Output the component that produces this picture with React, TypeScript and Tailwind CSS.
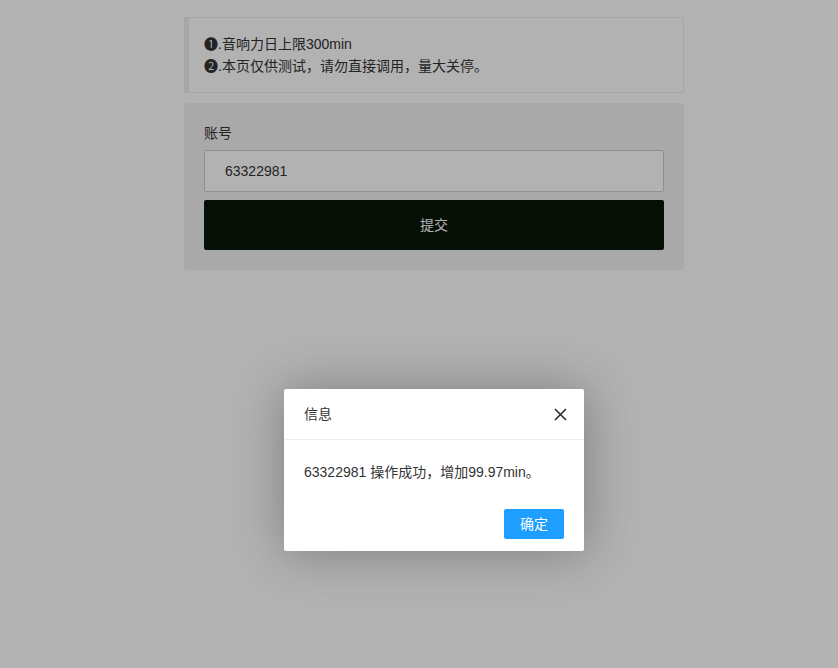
import React from "react";

const font = { fontFamily: '"Liberation Sans", "Noto Sans CJK SC", sans-serif' };

export default function App() {
  return (
    <div className="relative min-h-[668px] w-full bg-white text-[14px] text-[#333]" style={font}>
      <div className="ml-[184px] w-[500px] pt-[17px]">
        <div className="border border-l-[5px] border-[#eee] px-[15px] py-[15px] leading-[22px]">
          <div>❶.音响力日上限300min</div>
          <div>❷.本页仅供测试，请勿直接调用，量大关停。</div>
        </div>
        <div className="mt-[10px] rounded-[4px] bg-[#f2f2f2] p-[20px]">
          <div className="leading-[20px]">账号</div>
          <div className="mt-[7px] flex h-[42px] items-center rounded-[2px] border border-[#cfcfcf] bg-white pl-[20px] text-[#333]">
            63322981
          </div>
          <div className="mt-[8px] flex h-[50px] items-center justify-center rounded-[2px] bg-[#091609] text-white">
            提交
          </div>
        </div>
      </div>

      <div className="absolute inset-0 bg-black/30" />

      <div className="absolute left-[284px] top-[389px] w-[300px] rounded-[2px] bg-white shadow-[1px_1px_50px_rgba(0,0,0,0.3)]">
        <div className="relative flex h-[51px] items-center border-b border-[#eee] pl-[20px] text-[#333]">
          信息
          <svg className="absolute left-[270px] top-[19px]" width="13" height="13" viewBox="0 0 13 13">
            <path d="M1 1L12 12M12 1L1 12" stroke="#2b2b2b" strokeWidth="1.6" />
          </svg>
        </div>
        <div className="px-[20px] py-[20px] leading-[24px] text-[#333]">63322981 操作成功，增加99.97min。</div>
        <div className="flex justify-end px-[15px] pb-[12px]">
          <div className="mr-[5px] mt-[5px] flex h-[30px] w-[60px] items-center justify-center rounded-[2px] bg-[#1E9FFF] text-white">
            确定
          </div>
        </div>
      </div>
    </div>
  );
}
